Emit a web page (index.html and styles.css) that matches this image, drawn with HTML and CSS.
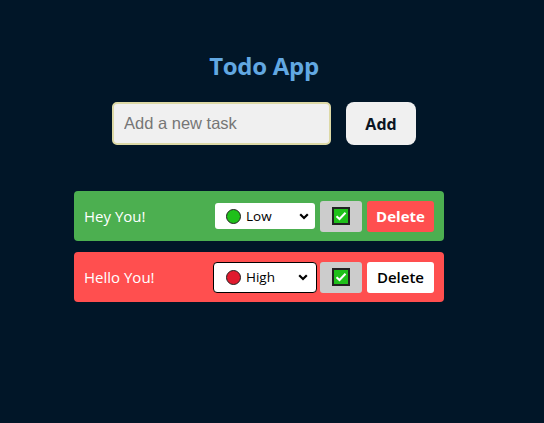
FILE: index.html
```html
<!DOCTYPE html>
<html lang="en">
<head>
<meta charset="utf-8">
<title>Todo App</title>
<link rel="stylesheet" href="styles.css">
</head>
<body>
<div class="app">
  <h1 class="title">Todo App</h1>
  <div class="add-row">
    <input class="task-input" type="text" placeholder="Add a new task">
    <button class="add-btn">Add</button>
  </div>
  <ul class="list">
    <li class="item item-low">
      <span class="item-text">Hey You!</span>
      <div class="controls">
        <div class="prio">
          <span class="dot dot-green"></span>
          <span class="prio-text">Low</span>
          <svg class="chev" width="10" height="7" viewBox="0 0 10 7"><path d="M1.2 1.2 L5 5 L8.8 1.2" fill="none" stroke="#000" stroke-width="2.2"/></svg>
        </div>
        <div class="check-wrap">
          <span class="check"><svg width="12" height="10" viewBox="0 0 12 10"><path d="M1.5 5.2 L4.5 8 L10.5 1.8" fill="none" stroke="#fff" stroke-width="2"/></svg></span>
        </div>
        <button class="del del-red">Delete</button>
      </div>
    </li>
    <li class="item item-high">
      <span class="item-text">Hello You!</span>
      <div class="controls">
        <div class="prio prio-focus">
          <span class="dot dot-red"></span>
          <span class="prio-text">High</span>
          <svg class="chev" width="10" height="7" viewBox="0 0 10 7"><path d="M1.2 1.2 L5 5 L8.8 1.2" fill="none" stroke="#000" stroke-width="2.2"/></svg>
        </div>
        <div class="check-wrap">
          <span class="check"><svg width="12" height="10" viewBox="0 0 12 10"><path d="M1.5 5.2 L4.5 8 L10.5 1.8" fill="none" stroke="#fff" stroke-width="2"/></svg></span>
        </div>
        <button class="del del-white">Delete</button>
      </div>
    </li>
  </ul>
</div>
</body>
</html>
```
FILE: styles.css
```css
html, body {
  margin: 0;
  padding: 0;
  background: #011628;
  height: 100%;
}
body {
  font-family: "Open Sans", "Noto Sans", sans-serif;
}
.app {
  display: flex;
  flex-direction: column;
  align-items: flex-start;
  padding-top: 49px;
}
.title {
  align-self: stretch;
  margin: 0 0 0 -16px;
  text-align: center;
  color: #62a8e2;
  font-size: 24px;
  font-weight: 700;
  letter-spacing: -0.3px;
  line-height: 34px;
}
.add-row {
  display: flex;
  gap: 15px;
  margin: 19px 0 0 112px;
}
.task-input {
  box-sizing: border-box;
  width: 219px;
  height: 43px;
  background: #f0f0f0;
  border: 2px solid #ddd9a6;
  border-radius: 5px;
  padding: 0 10px;
  font-family: "Liberation Sans", Arial, sans-serif;
  font-size: 16.5px;
  color: #333;
  outline: none;
}
.task-input::placeholder {
  color: #767676;
}
.add-btn {
  width: 70px;
  height: 43px;
  border: none;
  border-radius: 8px;
  background: #f0f0f0;
  font-family: "Open Sans", sans-serif;
  font-weight: 700;
  font-size: 16px;
  color: #0b1522;
  padding: 0;
  padding-top: 1px;
}
.list {
  list-style: none;
  margin: 46px 0 0 74px;
  padding: 0;
  display: flex;
  flex-direction: column;
  gap: 11px;
}
.item {
  box-sizing: border-box;
  width: 370px;
  height: 50px;
  border-radius: 4px;
  display: flex;
  align-items: center;
  justify-content: space-between;
  padding: 0 10px;
}
.item-low { background: #4caf50; }
.item-high { background: #ff4f4f; }
.item-text {
  color: #fff;
  font-size: 15px;
}
.controls {
  display: flex;
  align-items: center;
  gap: 5px;
}
.prio {
  box-sizing: border-box;
  width: 100px;
  height: 26px;
  background: #fff;
  border-radius: 3px;
  display: flex;
  align-items: center;
  padding: 0 6px 0 11px;
  font-family: "Open Sans", sans-serif;
  font-size: 13.5px;
  color: #000;
}
.prio-focus {
  width: 104px;
  height: 31px;
  border: 1px solid #000;
  border-radius: 4px;
  margin-right: -2px;
  padding: 0 8px 0 12px;
}
.dot {
  width: 15px;
  height: 15px;
  box-sizing: border-box;
  border-radius: 50%;
  border: 1px solid #222;
  margin-right: 5px;
}
.dot-green { background: #1fc01a; }
.dot-red { background: #e01a2e; }
.prio-text { flex: 1; }
.chev { display: block; }
.check-wrap {
  width: 42px;
  height: 31px;
  background: #cccccc;
  border-radius: 3px;
  display: flex;
  align-items: center;
  justify-content: center;
}
.check {
  box-sizing: border-box;
  width: 18px;
  height: 18px;
  background: #1fc01a;
  border: 2px solid #222;
  display: flex;
  align-items: center;
  justify-content: center;
}
.check svg { display: block; }
.del {
  width: 67px;
  height: 31px;
  border: none;
  border-radius: 3px;
  font-family: "Open Sans", sans-serif;
  font-weight: 700;
  font-size: 15px;
  padding: 0;
}
.del-red { background: #ff4f4f; color: #fff; }
.del-white { background: #fff; color: #000; font-weight: 600; }
```
